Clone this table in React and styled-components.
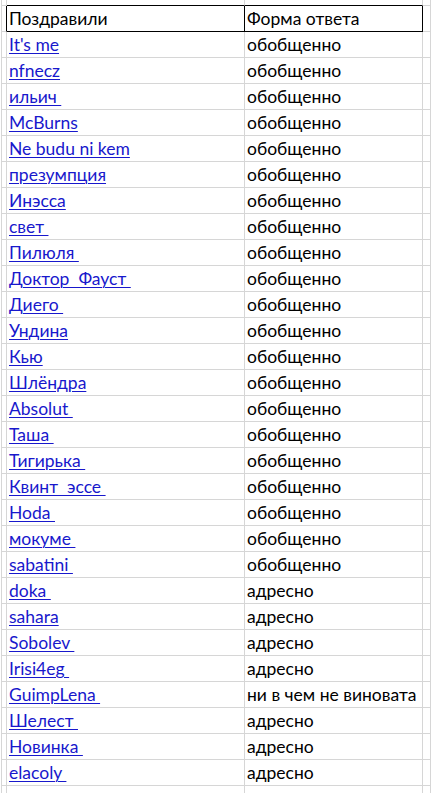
import React from "react";
import styled, { createGlobalStyle } from "styled-components";

const Global = createGlobalStyle`
  html, body { margin: 0; padding: 0; background: #ffffff; }
  body { font-family: Lato, "Open Sans", sans-serif; }
`;

const GRID = "#d6d6d6";
const DARK = "#000000";

const Sheet = styled.div`
  display: grid;
  grid-template-columns: 5px 238px 178px 1fr;
  grid-auto-rows: 26px;
  grid-template-rows: 6px;
  margin-left: 1px;
  border-left: 1px solid ${GRID};
  width: 430px;
  height: 793px;
  overflow: hidden;
  box-sizing: border-box;
`;

const Cell = styled.div`
  box-sizing: border-box;
  border-right: 1px solid ${(p) => (p.$darkRight ? DARK : GRID)};
  border-bottom: 1px solid ${(p) => (p.$darkBottom ? DARK : GRID)};
  display: flex;
  align-items: flex-end;
  padding: 0 0 2px 2px;
  font-size: 17.5px;
  line-height: 20px;
  color: #000;
  white-space: pre;
  overflow: hidden;
`;

const Link = styled.a`
  color: #1818cc;
  text-decoration: underline;
  text-underline-offset: 2px;
  text-decoration-thickness: 1px;
`;

const rows = [
  ["It's me", "обобщенно"],
  ["nfnecz", "обобщенно"],
  ["ильич ", "обобщенно"],
  ["McBurns", "обобщенно"],
  ["Ne budu ni kem", "обобщенно"],
  ["презумпция", "обобщенно"],
  ["Инэсса", "обобщенно"],
  ["свет ", "обобщенно"],
  ["Пилюля ", "обобщенно"],
  ["Доктор  Фауст ", "обобщенно"],
  ["Диего ", "обобщенно"],
  ["Ундина", "обобщенно"],
  ["Кью", "обобщенно"],
  ["Шлёндра", "обобщенно"],
  ["Absolut ", "обобщенно"],
  ["Таша ", "обобщенно"],
  ["Тигирька ", "обобщенно"],
  ["Квинт  эссе ", "обобщенно"],
  ["Hoda ", "обобщенно"],
  ["мокуме ", "обобщенно"],
  ["sabatini ", "обобщенно"],
  ["doka ", "адресно"],
  ["sahara", "адресно"],
  ["Sobolev ", "адресно"],
  ["Irisi4eg ", "адресно"],
  ["GuimpLena ", "ни в чем не виновата"],
  ["Шелест ", "адресно"],
  ["Новинка ", "адресно"],
  ["elacoly ", "адресно"],
];

export default function App() {
  return (
    <>
      <Global />
      <Sheet>
        <Cell />
        <Cell $darkBottom />
        <Cell $darkBottom />
        <Cell />

        <Cell $darkRight />
        <Cell $darkRight $darkBottom>Поздравили</Cell>
        <Cell $darkRight $darkBottom>Форма ответа</Cell>
        <Cell />

        {rows.map(([name, form], i) => (
          <React.Fragment key={i}>
            <Cell />
            <Cell>
              <Link href="#">{name}</Link>
            </Cell>
            <Cell>{form}</Cell>
            <Cell />
          </React.Fragment>
        ))}
        <Cell />
        <Cell />
        <Cell />
        <Cell />
      </Sheet>
    </>
  );
}
